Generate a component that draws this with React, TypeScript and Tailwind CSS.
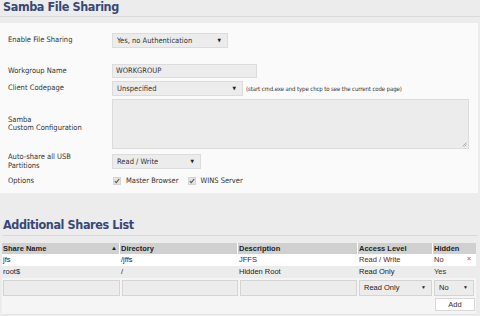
import React from 'react';

const tahoma = { fontFamily: '"DejaVu Sans Condensed", "DejaVu Sans", sans-serif' };
const arial = { fontFamily: '"Liberation Sans", Arial, sans-serif' };

const Select: React.FC<{ label: string; className?: string }> = ({ label, className = '' }) => (
  <div
    className={`flex items-center justify-between h-[15px] pl-[4px] pr-[6px] bg-[#ececec] border border-[#dcdcdc] text-[7.5px] text-[#333] ${className}`}
  >
    <span>{label}</span>
    <span className="text-[5px] text-[#222]">▼</span>
  </div>
);

const Check: React.FC<{ label: string }> = ({ label }) => (
  <div className="flex items-center gap-[5px]">
    <span className="w-[8px] h-[8px] bg-[#e4e4e4] border border-[#d4d4d4] flex items-center justify-center">
      <svg width="6" height="6" viewBox="0 0 6 6">
        <path d="M0.8 3.2 L2.3 4.7 L5.2 1" stroke="#555" strokeWidth="1.1" fill="none" />
      </svg>
    </span>
    <span>{label}</span>
  </div>
);

const FormRow: React.FC<{ label: React.ReactNode; children: React.ReactNode; className?: string }> = ({
  label,
  children,
  className = '',
}) => (
  <div className={`flex items-center ${className}`}>
    <div className="w-[104px] leading-[8.5px]">{label}</div>
    {children}
  </div>
);

const cols = ['w-[118px]', 'w-[118px]', 'w-[120px]', 'w-[75px]', 'w-[43px]'];

export default function App() {
  return (
    <div className="w-[480px] h-[316px] bg-[#ececec] overflow-hidden relative" style={tahoma}>
      {/* Samba heading */}
      <h1 className="pl-[3px] h-[15px] text-[12.5px] leading-[14px] font-bold tracking-[-0.4px] text-[#374878]">
        Samba File Sharing
      </h1>
      <div className="h-[1px] bg-[#d9d9d9] mt-[1px]" />

      {/* Settings panel */}
      <div className="mt-[6px] mr-[2px] h-[170px] bg-[#fafafa] pl-[8px] pt-[10px] text-[7.5px] text-[#333]">
        <FormRow label="Enable File Sharing">
          <Select label="Yes, no Authentication" className="w-[116px]" />
        </FormRow>

        <FormRow label="Workgroup Name" className="mt-[16px]">
          <div className="w-[145px] h-[14px] bg-[#ececec] border border-[#dcdcdc] pl-[3px] flex items-center">
            WORKGROUP
          </div>
        </FormRow>

        <FormRow label="Client Codepage" className="mt-[3px]">
          <Select label="Unspecified" className="w-[131px]" />
          <span className="ml-[3px] text-[6px] tracking-[-0.1px]">
            (start cmd.exe and type chcp to see the current code page)
          </span>
        </FormRow>

        <FormRow
          label={
            <div>
              Samba
              <br />
              Custom Configuration
            </div>
          }
          className="mt-[3px]"
        >
          <div className="w-[357px] h-[50px] bg-[#ececec] border border-[#dcdcdc] relative">
            <svg className="absolute right-[1px] bottom-[1px]" width="5" height="5" viewBox="0 0 5 5">
              <path d="M4.5 0.5 L0.5 4.5 M4.5 2.5 L2.5 4.5" stroke="#999" strokeWidth="0.8" />
            </svg>
          </div>
        </FormRow>

        <FormRow
          label={
            <div>
              Auto-share all USB
              <br />
              Partitions
            </div>
          }
          className="mt-[4px]"
        >
          <Select label="Read / Write" className="w-[89px]" />
        </FormRow>

        <FormRow label="Options" className="mt-[4px] h-[14px]">
          <div className="flex items-center gap-[9px] pl-[1px]">
            <Check label="Master Browser" />
            <Check label="WINS Server" />
          </div>
        </FormRow>
      </div>

      {/* Additional shares heading */}
      <h2 className="mt-[25px] pl-[3px] h-[15px] text-[12.5px] leading-[14px] font-bold tracking-[-0.4px] text-[#374878]">
        Additional Shares List
      </h2>
      <div className="h-[1px] bg-[#d9d9d9] mt-[2px] mx-[2px]" />

      {/* Table */}
      <div className="mt-[7px] ml-[2px] w-[474px] text-[7.5px] text-[#222]" style={arial}>
        <div className="flex h-[11px] font-bold text-[#222]">
          {['Share Name', 'Directory', 'Description', 'Access Level', 'Hidden'].map((h, i) => (
            <div
              key={h}
              className={`${cols[i]} bg-[#d0d0d0] flex items-center justify-between pl-[1px] pr-[2px] ${
                i < 4 ? 'border-r border-white' : ''
              }`}
            >
              <span>{h}</span>
              {i === 0 && <span className="text-[6px]">▲</span>}
            </div>
          ))}
        </div>

        <div className="flex h-[12px] bg-white items-center">
          <div className={`${cols[0]} pl-[1px]`}>jfs</div>
          <div className={`${cols[1]} pl-[1px]`}>/jffs</div>
          <div className={`${cols[2]} pl-[1px] text-[#1f2a4a]`}>JFFS</div>
          <div className={`${cols[3]} pl-[1px] text-[#5a2424]`}>Read / Write</div>
          <div className={`${cols[4]} pl-[1px] text-[#5a2424] flex justify-between pr-[5px]`}>
            <span>No</span>
            <span className="text-[#e06a78] text-[7px] font-bold">×</span>
          </div>
        </div>

        <div className="flex h-[12px] bg-[#ececec] items-center">
          <div className={`${cols[0]} pl-[1px]`}>root$</div>
          <div className={`${cols[1]} pl-[1px]`}>/</div>
          <div className={`${cols[2]} pl-[1px]`}>Hidden Root</div>
          <div className={`${cols[3]} pl-[1px] text-[#222]`}>Read Only</div>
          <div className={`${cols[4]} pl-[1px] text-[#2f3a2f]`}>Yes</div>
        </div>

        <div className="bg-[#f5f5f5] pt-[2px] pb-[3px] border-b border-[#e4e4e4]">
          <div className="flex gap-[2px] pl-[1px]">
            <div className="w-[117px] h-[16px] bg-[#ececec] border border-[#d4d4d4]" />
            <div className="w-[116px] h-[16px] bg-[#ececec] border border-[#d4d4d4]" />
            <div className="w-[117px] h-[16px] bg-[#ececec] border border-[#d4d4d4]" />
            <div className="w-[73px] h-[16px] bg-[#ececec] border border-[#d4d4d4] flex items-center justify-between pl-[4px] pr-[5px]">
              <span>Read Only</span>
              <span className="text-[5px]">▼</span>
            </div>
            <div className="w-[40px] h-[16px] bg-[#ececec] border border-[#d4d4d4] flex items-center justify-between pl-[4px] pr-[5px]">
              <span>No</span>
              <span className="text-[5px]">▼</span>
            </div>
          </div>
          <div className="flex justify-end mt-[2px] pr-[1px]">
            <div className="w-[40px] h-[13px] bg-white border border-[#d8d8d8] flex items-center justify-center text-[#333]">
              Add
            </div>
          </div>
        </div>
      </div>
    </div>
  );
}
